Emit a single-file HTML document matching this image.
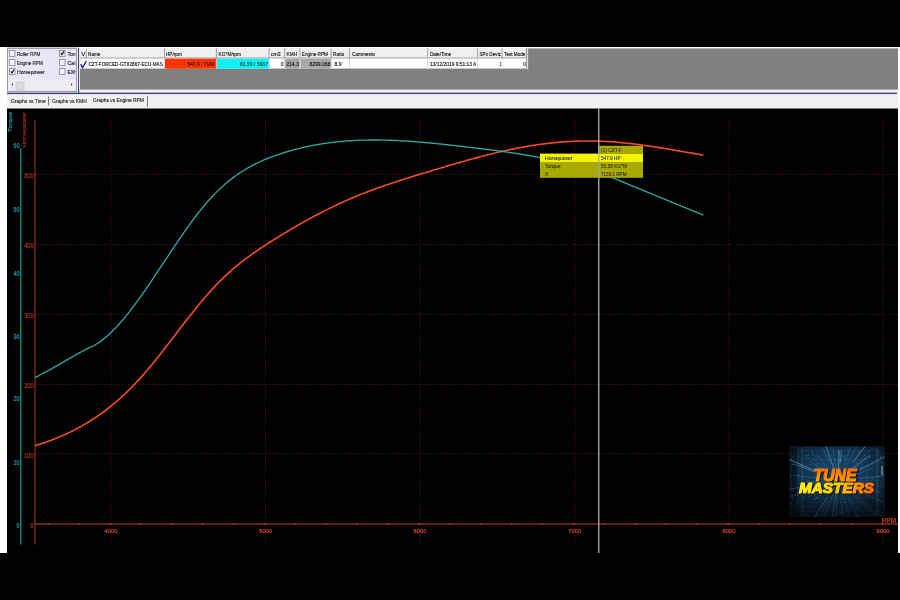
<!DOCTYPE html>
<html><head><meta charset="utf-8">
<style>
html,body{margin:0;padding:0;width:900px;height:600px;overflow:hidden;background:#000}
svg{display:block;position:absolute;left:0;top:0;will-change:transform}
text{font-family:"Liberation Sans",sans-serif}
</style></head><body>
<svg width="900" height="600" viewBox="0 0 900 600">
<rect x="0" y="47" width="900" height="506" fill="#ffffff" />
<rect x="7" y="47" width="891" height="61" fill="#f1f1f1" />
<rect x="7" y="47.2" width="71" height="1" fill="#c8c8cc" />
<rect x="7" y="48" width="70" height="44" fill="#9c9cab" />
<rect x="8" y="49" width="68" height="42" fill="#e7e7f7" />
<rect x="8" y="80" width="68" height="11" fill="#ececf2" />
<rect x="9.5" y="50.5" width="5.5" height="6" fill="#f3f3fa" stroke="#8e8e9e" stroke-width="0.9"/>
<rect x="59.5" y="50.5" width="5.5" height="6" fill="#f3f3fa" stroke="#8e8e9e" stroke-width="0.9"/>
<rect x="9.5" y="59.5" width="5.5" height="6" fill="#f3f3fa" stroke="#8e8e9e" stroke-width="0.9"/>
<rect x="59.5" y="59.5" width="5.5" height="6" fill="#f3f3fa" stroke="#8e8e9e" stroke-width="0.9"/>
<rect x="9.5" y="68.5" width="5.5" height="6" fill="#f3f3fa" stroke="#8e8e9e" stroke-width="0.9"/>
<rect x="59.5" y="68.5" width="5.5" height="6" fill="#f3f3fa" stroke="#8e8e9e" stroke-width="0.9"/>
<path d="M10.8 71.2 L12 73 L14 69.6" stroke="#111" stroke-width="1.1" fill="none"/>
<path d="M60.8 53 L62 54.8 L64 51.4" stroke="#111" stroke-width="1.1" fill="none"/>
<text x="17" y="55.6" font-size="5.3" fill="#242424" text-anchor="start" font-weight="normal" textLength="23.2" lengthAdjust="spacingAndGlyphs"  stroke="#242424" stroke-width="0.14">Roller RPM</text>
<text x="17" y="64.6" font-size="5.3" fill="#242424" text-anchor="start" font-weight="normal" textLength="25.7" lengthAdjust="spacingAndGlyphs"  stroke="#242424" stroke-width="0.14">Engine RPM</text>
<text x="17" y="73.6" font-size="5.3" fill="#242424" text-anchor="start" font-weight="normal" textLength="27.7" lengthAdjust="spacingAndGlyphs"  stroke="#242424" stroke-width="0.14">Horsepower</text>
<clipPath id="c2"><rect x="66" y="49" width="9.5" height="30"/></clipPath>
<g clip-path="url(#c2)">
<text x="67.4" y="55.6" font-size="5.3" fill="#242424" text-anchor="start" font-weight="normal" textLength="15.5" lengthAdjust="spacingAndGlyphs"  stroke="#242424" stroke-width="0.14">Torque</text>
<text x="67.4" y="64.6" font-size="5.3" fill="#242424" text-anchor="start" font-weight="normal" textLength="11" lengthAdjust="spacingAndGlyphs"  stroke="#242424" stroke-width="0.14">Calc</text>
<text x="67.4" y="73.6" font-size="5.3" fill="#242424" text-anchor="start" font-weight="normal" textLength="9.5" lengthAdjust="spacingAndGlyphs"  stroke="#242424" stroke-width="0.14">EXh</text>
</g>
<path d="M11.5 84.5 L13 83 L13 86 Z" fill="#444"/>
<path d="M72.5 84.5 L71 83 L71 86 Z" fill="#444"/>
<rect x="16" y="82" width="8" height="8" fill="#dcdcdc" stroke="#c4c4c8" stroke-width="0.8"/>
<rect x="78" y="48" width="1.2" height="46" fill="#4a4a7c" />
<rect x="7" y="92.6" width="890" height="1.9" fill="#45457a" />
<rect x="79.5" y="47" width="818.5" height="42.5" fill="#ffffff" />
<rect x="80" y="48.4" width="818" height="41.2" fill="#808080" />
<rect x="80" y="48.4" width="446.7" height="9.8" fill="#efefef" />
<rect x="80" y="48.4" width="446.7" height="0.8" fill="#ffffff" />
<rect x="80" y="57.6" width="446.7" height="0.9" fill="#8c8c8c" />
<rect x="80" y="58.4" width="446.7" height="10.6" fill="#ffffff" />
<rect x="80" y="68.6" width="446.7" height="0.9" fill="#7a7a7a" />
<rect x="164.8" y="58.6" width="51.9" height="10.1" fill="#ff3600" />
<rect x="216.9" y="58.6" width="52.4" height="10.1" fill="#10f2f2" />
<rect x="285.2" y="58.6" width="15" height="10.1" fill="#a6a6a6" />
<rect x="300.5" y="58.6" width="30.8" height="10.1" fill="#a9a9a9" />
<rect x="85.7" y="48.4" width="0.9" height="10" fill="#9a9a9a" />
<rect x="85.7" y="58.5" width="0.8" height="10.2" fill="#d8d8d8" />
<rect x="164" y="48.4" width="0.9" height="10" fill="#9a9a9a" />
<rect x="164" y="58.5" width="0.8" height="10.2" fill="#d8d8d8" />
<rect x="215.9" y="48.4" width="0.9" height="10" fill="#9a9a9a" />
<rect x="215.9" y="58.5" width="0.8" height="10.2" fill="#d8d8d8" />
<rect x="268.6" y="48.4" width="0.9" height="10" fill="#9a9a9a" />
<rect x="268.6" y="58.5" width="0.8" height="10.2" fill="#d8d8d8" />
<rect x="284.2" y="48.4" width="0.9" height="10" fill="#9a9a9a" />
<rect x="284.2" y="58.5" width="0.8" height="10.2" fill="#d8d8d8" />
<rect x="299.5" y="48.4" width="0.9" height="10" fill="#9a9a9a" />
<rect x="299.5" y="58.5" width="0.8" height="10.2" fill="#d8d8d8" />
<rect x="330.6" y="48.4" width="0.9" height="10" fill="#9a9a9a" />
<rect x="330.6" y="58.5" width="0.8" height="10.2" fill="#d8d8d8" />
<rect x="349" y="48.4" width="0.9" height="10" fill="#9a9a9a" />
<rect x="349" y="58.5" width="0.8" height="10.2" fill="#d8d8d8" />
<rect x="427.2" y="48.4" width="0.9" height="10" fill="#9a9a9a" />
<rect x="427.2" y="58.5" width="0.8" height="10.2" fill="#d8d8d8" />
<rect x="476.9" y="48.4" width="0.9" height="10" fill="#9a9a9a" />
<rect x="476.9" y="58.5" width="0.8" height="10.2" fill="#d8d8d8" />
<rect x="501.6" y="48.4" width="0.9" height="10" fill="#9a9a9a" />
<rect x="501.6" y="58.5" width="0.8" height="10.2" fill="#d8d8d8" />
<rect x="525.9" y="48.4" width="0.9" height="10" fill="#9a9a9a" />
<rect x="525.9" y="58.5" width="0.8" height="10.2" fill="#d8d8d8" />
<rect x="526.4" y="48.4" width="0.9" height="21" fill="#8a8a8a" />
<rect x="527.3" y="48.4" width="0.8" height="21" fill="#ffffff" />
<text x="81.2" y="55.7" font-size="5.4" fill="#141414" text-anchor="start" font-weight="normal" textLength="4" lengthAdjust="spacingAndGlyphs"  stroke="#141414" stroke-width="0.14">V</text>
<text x="88.1" y="55.7" font-size="5.4" fill="#141414" text-anchor="start" font-weight="normal" textLength="12.3" lengthAdjust="spacingAndGlyphs"  stroke="#141414" stroke-width="0.14">Name</text>
<text x="166" y="55.7" font-size="5.4" fill="#141414" text-anchor="start" font-weight="normal" textLength="15.8" lengthAdjust="spacingAndGlyphs"  stroke="#141414" stroke-width="0.14">HP/rpm</text>
<text x="218.6" y="55.7" font-size="5.4" fill="#141414" text-anchor="start" font-weight="normal" textLength="22.4" lengthAdjust="spacingAndGlyphs"  stroke="#141414" stroke-width="0.14">KG*M/rpm</text>
<text x="271" y="55.7" font-size="5.4" fill="#141414" text-anchor="start" font-weight="normal" textLength="9.7" lengthAdjust="spacingAndGlyphs"  stroke="#141414" stroke-width="0.14">cm3</text>
<text x="286.6" y="55.7" font-size="5.4" fill="#141414" text-anchor="start" font-weight="normal" textLength="10.6" lengthAdjust="spacingAndGlyphs"  stroke="#141414" stroke-width="0.14">KMH</text>
<text x="301.8" y="55.7" font-size="5.4" fill="#141414" text-anchor="start" font-weight="normal" textLength="26.2" lengthAdjust="spacingAndGlyphs"  stroke="#141414" stroke-width="0.14">Engine RPM</text>
<text x="333.1" y="55.7" font-size="5.4" fill="#141414" text-anchor="start" font-weight="normal" textLength="11" lengthAdjust="spacingAndGlyphs"  stroke="#141414" stroke-width="0.14">Ratio</text>
<text x="352" y="55.7" font-size="5.4" fill="#141414" text-anchor="start" font-weight="normal" textLength="23" lengthAdjust="spacingAndGlyphs"  stroke="#141414" stroke-width="0.14">Comments</text>
<text x="429.9" y="55.7" font-size="5.4" fill="#141414" text-anchor="start" font-weight="normal" textLength="21.2" lengthAdjust="spacingAndGlyphs"  stroke="#141414" stroke-width="0.14">Date/Time</text>
<text x="479.4" y="55.7" font-size="5.4" fill="#141414" text-anchor="start" font-weight="normal" textLength="21.7" lengthAdjust="spacingAndGlyphs"  stroke="#141414" stroke-width="0.14">SPx Devic</text>
<text x="504.1" y="55.7" font-size="5.4" fill="#141414" text-anchor="start" font-weight="normal" textLength="21.2" lengthAdjust="spacingAndGlyphs"  stroke="#141414" stroke-width="0.14">Test Mode</text>
<path d="M80.6 64.2 L82.6 67.6 L86.2 61.2" stroke="#1414b4" stroke-width="1.3" fill="none"/>
<clipPath id="cn"><rect x="86.5" y="58" width="77.5" height="11"/></clipPath>
<text x="88.5" y="65.8" font-size="5.5" fill="#121212" text-anchor="start" font-weight="normal" textLength="74.3" lengthAdjust="spacingAndGlyphs"  stroke="#121212" stroke-width="0.14"><tspan clip-path="url(#cn)">CZT-FORCED-GTX2867-ECU-MAS</tspan></text>
<text x="187.6" y="65.8" font-size="5.5" fill="#3a0a00" text-anchor="start" font-weight="normal" textLength="27.1" lengthAdjust="spacingAndGlyphs"  stroke="#3a0a00" stroke-width="0.14">547.9 / 7180</text>
<text x="239.8" y="65.8" font-size="5.5" fill="#0b4848" text-anchor="start" font-weight="normal" textLength="28.2" lengthAdjust="spacingAndGlyphs"  stroke="#0b4848" stroke-width="0.14">60.59 / 5687</text>
<text x="280.7" y="65.8" font-size="5.5" fill="#121212" text-anchor="start" font-weight="normal" textLength="2.8" lengthAdjust="spacingAndGlyphs"  stroke="#121212" stroke-width="0.14">0</text>
<text x="286.2" y="65.8" font-size="5.5" fill="#121212" text-anchor="start" font-weight="normal" textLength="12.7" lengthAdjust="spacingAndGlyphs"  stroke="#121212" stroke-width="0.14">214.3</text>
<text x="309.4" y="65.8" font-size="5.5" fill="#121212" text-anchor="start" font-weight="normal" textLength="21.2" lengthAdjust="spacingAndGlyphs"  stroke="#121212" stroke-width="0.14">8299.068</text>
<text x="334.4" y="65.8" font-size="5.5" fill="#121212" text-anchor="start" font-weight="normal" textLength="7.1" lengthAdjust="spacingAndGlyphs"  stroke="#121212" stroke-width="0.14">8.9</text>
<text x="429.9" y="65.8" font-size="5.5" fill="#121212" text-anchor="start" font-weight="normal" textLength="46.5" lengthAdjust="spacingAndGlyphs"  stroke="#121212" stroke-width="0.14">13/12/2019 9:51:13 A</text>
<text x="499.6" y="65.8" font-size="5.5" fill="#121212" text-anchor="start" font-weight="normal" textLength="1.8" lengthAdjust="spacingAndGlyphs"  stroke="#121212" stroke-width="0.14">1</text>
<text x="523.3" y="65.8" font-size="5.5" fill="#121212" text-anchor="start" font-weight="normal" textLength="2.6" lengthAdjust="spacingAndGlyphs"  stroke="#121212" stroke-width="0.14">0</text>
<rect x="7" y="94.3" width="891" height="0.8" fill="#ffffff" />
<text x="11" y="102.7" font-size="5.6" fill="#242424" text-anchor="start" font-weight="normal" textLength="34.7" lengthAdjust="spacingAndGlyphs"  stroke="#242424" stroke-width="0.14">Graphs vs Time</text>
<rect x="48" y="96.5" width="0.9" height="9" fill="#707070" />
<text x="52" y="102.9" font-size="5.6" fill="#242424" text-anchor="start" font-weight="normal" textLength="34.7" lengthAdjust="spacingAndGlyphs"  stroke="#242424" stroke-width="0.14">Graphs vs KMH</text>
<text x="93" y="102.2" font-size="5.6" fill="#222" text-anchor="start" font-weight="normal" textLength="50.9" lengthAdjust="spacingAndGlyphs"  stroke="#222" stroke-width="0.14">Graphs vs Engine RPM</text>
<rect x="147" y="95.8" width="0.9" height="11" fill="#707070" />
<rect x="7" y="108.5" width="891" height="444.5" fill="#000000" />
<line x1="35" y1="174.5" x2="898" y2="174.5" stroke="#3c1612" stroke-width="1" stroke-dasharray="1.5,1.5"/>
<line x1="35" y1="244.5" x2="898" y2="244.5" stroke="#3c1612" stroke-width="1" stroke-dasharray="1.5,1.5"/>
<line x1="35" y1="314.5" x2="898" y2="314.5" stroke="#3c1612" stroke-width="1" stroke-dasharray="1.5,1.5"/>
<line x1="35" y1="384.5" x2="898" y2="384.5" stroke="#3c1612" stroke-width="1" stroke-dasharray="1.5,1.5"/>
<line x1="35" y1="453.5" x2="898" y2="453.5" stroke="#3c1612" stroke-width="1" stroke-dasharray="1.5,1.5"/>
<line x1="111" y1="120" x2="111" y2="546" stroke="#3c1612" stroke-width="1" stroke-dasharray="1.5,1.5"/>
<line x1="265.5" y1="120" x2="265.5" y2="546" stroke="#3c1612" stroke-width="1" stroke-dasharray="1.5,1.5"/>
<line x1="420" y1="120" x2="420" y2="546" stroke="#3c1612" stroke-width="1" stroke-dasharray="1.5,1.5"/>
<line x1="574.8" y1="120" x2="574.8" y2="546" stroke="#3c1612" stroke-width="1" stroke-dasharray="1.5,1.5"/>
<line x1="729" y1="120" x2="729" y2="546" stroke="#3c1612" stroke-width="1" stroke-dasharray="1.5,1.5"/>
<line x1="883" y1="120" x2="883" y2="546" stroke="#3c1612" stroke-width="1" stroke-dasharray="1.5,1.5"/>
<line x1="35" y1="524" x2="898" y2="524" stroke="#862c16" stroke-width="1.5" />
<line x1="35" y1="120" x2="35" y2="544.5" stroke="#922e18" stroke-width="1.25" />
<line x1="20.8" y1="148" x2="20.8" y2="544.5" stroke="#169a94" stroke-width="1.25" />
<rect x="47.5" y="523.2" width="1.2" height="1.6" fill="#a8442a" />
<rect x="78.4" y="523.2" width="1.2" height="1.6" fill="#a8442a" />
<rect x="109.3" y="523.2" width="1.2" height="1.6" fill="#a8442a" />
<rect x="140.2" y="523.2" width="1.2" height="1.6" fill="#a8442a" />
<rect x="171.1" y="523.2" width="1.2" height="1.6" fill="#a8442a" />
<rect x="202" y="523.2" width="1.2" height="1.6" fill="#a8442a" />
<rect x="232.9" y="523.2" width="1.2" height="1.6" fill="#a8442a" />
<rect x="263.8" y="523.2" width="1.2" height="1.6" fill="#a8442a" />
<rect x="294.7" y="523.2" width="1.2" height="1.6" fill="#a8442a" />
<rect x="325.6" y="523.2" width="1.2" height="1.6" fill="#a8442a" />
<rect x="356.5" y="523.2" width="1.2" height="1.6" fill="#a8442a" />
<rect x="387.4" y="523.2" width="1.2" height="1.6" fill="#a8442a" />
<rect x="418.3" y="523.2" width="1.2" height="1.6" fill="#a8442a" />
<rect x="449.2" y="523.2" width="1.2" height="1.6" fill="#a8442a" />
<rect x="480.1" y="523.2" width="1.2" height="1.6" fill="#a8442a" />
<rect x="511" y="523.2" width="1.2" height="1.6" fill="#a8442a" />
<rect x="541.9" y="523.2" width="1.2" height="1.6" fill="#a8442a" />
<rect x="572.8" y="523.2" width="1.2" height="1.6" fill="#a8442a" />
<rect x="603.7" y="523.2" width="1.2" height="1.6" fill="#a8442a" />
<rect x="634.6" y="523.2" width="1.2" height="1.6" fill="#a8442a" />
<rect x="665.5" y="523.2" width="1.2" height="1.6" fill="#a8442a" />
<rect x="696.4" y="523.2" width="1.2" height="1.6" fill="#a8442a" />
<rect x="727.3" y="523.2" width="1.2" height="1.6" fill="#a8442a" />
<rect x="758.2" y="523.2" width="1.2" height="1.6" fill="#a8442a" />
<rect x="789.1" y="523.2" width="1.2" height="1.6" fill="#a8442a" />
<rect x="820" y="523.2" width="1.2" height="1.6" fill="#a8442a" />
<rect x="850.9" y="523.2" width="1.2" height="1.6" fill="#a8442a" />
<rect x="881.8" y="523.2" width="1.2" height="1.6" fill="#a8442a" />
<path d="M35.0 445.67 L36.0 445.37 L37.0 445.06 L38.0 444.75 L39.0 444.43 L40.0 444.11 L41.0 443.79 L42.0 443.46 L43.0 443.12 L44.0 442.78 L45.0 442.44 L46.0 442.09 L47.0 441.74 L48.0 441.38 L49.0 441.02 L50.0 440.65 L51.0 440.28 L52.0 439.90 L53.0 439.52 L54.0 439.13 L55.0 438.74 L56.0 438.34 L57.0 437.93 L58.0 437.52 L59.0 437.11 L60.0 436.69 L61.0 436.26 L62.0 435.83 L63.0 435.39 L64.0 434.95 L65.0 434.49 L66.0 434.04 L67.0 433.58 L68.0 433.11 L69.0 432.63 L70.0 432.15 L71.0 431.66 L72.0 431.17 L73.0 430.67 L74.0 430.16 L75.0 429.64 L76.0 429.12 L77.0 428.59 L78.0 428.06 L79.0 427.52 L80.0 426.97 L81.0 426.41 L82.0 425.85 L83.0 425.28 L84.0 424.70 L85.0 424.11 L86.0 423.52 L87.0 422.92 L88.0 422.31 L89.0 421.69 L90.0 421.07 L91.0 420.44 L92.0 419.80 L93.0 419.15 L94.0 418.50 L95.0 417.83 L96.0 417.16 L97.0 416.48 L98.0 415.79 L99.0 415.10 L100.0 414.39 L101.0 413.68 L102.0 412.96 L103.0 412.23 L104.0 411.49 L105.0 410.74 L106.0 409.98 L107.0 409.22 L108.0 408.44 L109.0 407.66 L110.0 406.86 L111.0 406.06 L112.0 405.25 L113.0 404.43 L114.0 403.60 L115.0 402.76 L116.0 401.91 L117.0 401.05 L118.0 400.18 L119.0 399.30 L120.0 398.41 L121.0 397.51 L122.0 396.60 L123.0 395.69 L124.0 394.76 L125.0 393.82 L126.0 392.87 L127.0 391.91 L128.0 390.94 L129.0 389.96 L130.0 388.97 L131.0 387.97 L132.0 386.96 L133.0 385.93 L134.0 384.90 L135.0 383.86 L136.0 382.80 L137.0 381.73 L138.0 380.66 L139.0 379.57 L140.0 378.47 L141.0 377.36 L142.0 376.24 L143.0 375.10 L144.0 373.96 L145.0 372.81 L146.0 371.64 L147.0 370.47 L148.0 369.29 L149.0 368.10 L150.0 366.90 L151.0 365.70 L152.0 364.48 L153.0 363.26 L154.0 362.03 L155.0 360.80 L156.0 359.55 L157.0 358.31 L158.0 357.05 L159.0 355.79 L160.0 354.53 L161.0 353.26 L162.0 351.98 L163.0 350.70 L164.0 349.42 L165.0 348.13 L166.0 346.84 L167.0 345.55 L168.0 344.26 L169.0 342.96 L170.0 341.66 L171.0 340.36 L172.0 339.05 L173.0 337.75 L174.0 336.44 L175.0 335.14 L176.0 333.83 L177.0 332.53 L178.0 331.22 L179.0 329.92 L180.0 328.61 L181.0 327.31 L182.0 326.01 L183.0 324.72 L184.0 323.42 L185.0 322.13 L186.0 320.84 L187.0 319.55 L188.0 318.27 L189.0 316.99 L190.0 315.72 L191.0 314.45 L192.0 313.18 L193.0 311.92 L194.0 310.67 L195.0 309.42 L196.0 308.18 L197.0 306.94 L198.0 305.71 L199.0 304.49 L200.0 303.28 L201.0 302.07 L202.0 300.88 L203.0 299.69 L204.0 298.51 L205.0 297.33 L206.0 296.17 L207.0 295.02 L208.0 293.88 L209.0 292.75 L210.0 291.62 L211.0 290.51 L212.0 289.42 L213.0 288.33 L214.0 287.25 L215.0 286.19 L216.0 285.14 L217.0 284.10 L218.0 283.07 L219.0 282.06 L220.0 281.06 L221.0 280.07 L222.0 279.09 L223.0 278.12 L224.0 277.16 L225.0 276.22 L226.0 275.28 L227.0 274.36 L228.0 273.45 L229.0 272.54 L230.0 271.65 L231.0 270.77 L232.0 269.89 L233.0 269.03 L234.0 268.17 L235.0 267.33 L236.0 266.49 L237.0 265.67 L238.0 264.85 L239.0 264.04 L240.0 263.23 L241.0 262.44 L242.0 261.65 L243.0 260.88 L244.0 260.10 L245.0 259.34 L246.0 258.59 L247.0 257.84 L248.0 257.09 L249.0 256.36 L250.0 255.63 L251.0 254.91 L252.0 254.19 L253.0 253.48 L254.0 252.78 L255.0 252.08 L256.0 251.38 L257.0 250.70 L258.0 250.01 L259.0 249.33 L260.0 248.66 L261.0 247.99 L262.0 247.33 L263.0 246.67 L264.0 246.01 L265.0 245.36 L266.0 244.71 L267.0 244.07 L268.0 243.42 L269.0 242.79 L270.0 242.15 L271.0 241.52 L272.0 240.89 L273.0 240.26 L274.0 239.63 L275.0 239.01 L276.0 238.39 L277.0 237.77 L278.0 237.15 L279.0 236.53 L280.0 235.92 L281.0 235.31 L282.0 234.70 L283.0 234.09 L284.0 233.48 L285.0 232.88 L286.0 232.28 L287.0 231.68 L288.0 231.08 L289.0 230.49 L290.0 229.89 L291.0 229.30 L292.0 228.71 L293.0 228.13 L294.0 227.54 L295.0 226.96 L296.0 226.38 L297.0 225.80 L298.0 225.23 L299.0 224.65 L300.0 224.08 L301.0 223.51 L302.0 222.95 L303.0 222.38 L304.0 221.82 L305.0 221.26 L306.0 220.71 L307.0 220.15 L308.0 219.60 L309.0 219.05 L310.0 218.51 L311.0 217.96 L312.0 217.42 L313.0 216.88 L314.0 216.35 L315.0 215.81 L316.0 215.28 L317.0 214.75 L318.0 214.23 L319.0 213.70 L320.0 213.18 L321.0 212.66 L322.0 212.15 L323.0 211.64 L324.0 211.13 L325.0 210.62 L326.0 210.12 L327.0 209.61 L328.0 209.12 L329.0 208.62 L330.0 208.13 L331.0 207.64 L332.0 207.15 L333.0 206.67 L334.0 206.19 L335.0 205.71 L336.0 205.23 L337.0 204.76 L338.0 204.29 L339.0 203.83 L340.0 203.36 L341.0 202.90 L342.0 202.44 L343.0 201.99 L344.0 201.54 L345.0 201.09 L346.0 200.65 L347.0 200.21 L348.0 199.77 L349.0 199.33 L350.0 198.90 L351.0 198.47 L352.0 198.05 L353.0 197.62 L354.0 197.20 L355.0 196.79 L356.0 196.37 L357.0 195.96 L358.0 195.55 L359.0 195.15 L360.0 194.74 L361.0 194.34 L362.0 193.95 L363.0 193.55 L364.0 193.16 L365.0 192.77 L366.0 192.38 L367.0 192.00 L368.0 191.62 L369.0 191.24 L370.0 190.86 L371.0 190.48 L372.0 190.11 L373.0 189.74 L374.0 189.37 L375.0 189.00 L376.0 188.64 L377.0 188.28 L378.0 187.92 L379.0 187.56 L380.0 187.21 L381.0 186.85 L382.0 186.50 L383.0 186.15 L384.0 185.80 L385.0 185.46 L386.0 185.11 L387.0 184.77 L388.0 184.43 L389.0 184.09 L390.0 183.75 L391.0 183.42 L392.0 183.08 L393.0 182.75 L394.0 182.42 L395.0 182.09 L396.0 181.76 L397.0 181.43 L398.0 181.11 L399.0 180.79 L400.0 180.46 L401.0 180.14 L402.0 179.82 L403.0 179.50 L404.0 179.18 L405.0 178.87 L406.0 178.55 L407.0 178.24 L408.0 177.92 L409.0 177.61 L410.0 177.30 L411.0 176.99 L412.0 176.68 L413.0 176.37 L414.0 176.06 L415.0 175.76 L416.0 175.45 L417.0 175.14 L418.0 174.84 L419.0 174.53 L420.0 174.23 L421.0 173.93 L422.0 173.62 L423.0 173.32 L424.0 173.02 L425.0 172.72 L426.0 172.42 L427.0 172.12 L428.0 171.81 L429.0 171.51 L430.0 171.21 L431.0 170.91 L432.0 170.62 L433.0 170.32 L434.0 170.02 L435.0 169.72 L436.0 169.42 L437.0 169.12 L438.0 168.82 L439.0 168.52 L440.0 168.22 L441.0 167.93 L442.0 167.63 L443.0 167.33 L444.0 167.03 L445.0 166.74 L446.0 166.44 L447.0 166.14 L448.0 165.85 L449.0 165.55 L450.0 165.26 L451.0 164.97 L452.0 164.67 L453.0 164.38 L454.0 164.09 L455.0 163.80 L456.0 163.51 L457.0 163.22 L458.0 162.93 L459.0 162.64 L460.0 162.35 L461.0 162.06 L462.0 161.78 L463.0 161.49 L464.0 161.21 L465.0 160.93 L466.0 160.64 L467.0 160.36 L468.0 160.08 L469.0 159.80 L470.0 159.53 L471.0 159.25 L472.0 158.97 L473.0 158.70 L474.0 158.43 L475.0 158.15 L476.0 157.88 L477.0 157.61 L478.0 157.35 L479.0 157.08 L480.0 156.81 L481.0 156.55 L482.0 156.29 L483.0 156.03 L484.0 155.77 L485.0 155.51 L486.0 155.25 L487.0 155.00 L488.0 154.74 L489.0 154.49 L490.0 154.24 L491.0 153.99 L492.0 153.74 L493.0 153.50 L494.0 153.26 L495.0 153.01 L496.0 152.77 L497.0 152.54 L498.0 152.30 L499.0 152.07 L500.0 151.83 L501.0 151.60 L502.0 151.37 L503.0 151.15 L504.0 150.92 L505.0 150.70 L506.0 150.48 L507.0 150.26 L508.0 150.05 L509.0 149.83 L510.0 149.62 L511.0 149.41 L512.0 149.21 L513.0 149.00 L514.0 148.80 L515.0 148.60 L516.0 148.40 L517.0 148.20 L518.0 148.01 L519.0 147.82 L520.0 147.63 L521.0 147.45 L522.0 147.26 L523.0 147.08 L524.0 146.90 L525.0 146.73 L526.0 146.55 L527.0 146.38 L528.0 146.21 L529.0 146.04 L530.0 145.88 L531.0 145.72 L532.0 145.56 L533.0 145.40 L534.0 145.25 L535.0 145.10 L536.0 144.95 L537.0 144.80 L538.0 144.65 L539.0 144.51 L540.0 144.37 L541.0 144.24 L542.0 144.10 L543.0 143.97 L544.0 143.84 L545.0 143.72 L546.0 143.59 L547.0 143.47 L548.0 143.36 L549.0 143.24 L550.0 143.13 L551.0 143.02 L552.0 142.91 L553.0 142.81 L554.0 142.70 L555.0 142.60 L556.0 142.51 L557.0 142.41 L558.0 142.32 L559.0 142.24 L560.0 142.15 L561.0 142.07 L562.0 141.99 L563.0 141.91 L564.0 141.84 L565.0 141.77 L566.0 141.70 L567.0 141.63 L568.0 141.57 L569.0 141.51 L570.0 141.46 L571.0 141.40 L572.0 141.35 L573.0 141.30 L574.0 141.26 L575.0 141.22 L576.0 141.18 L577.0 141.14 L578.0 141.11 L579.0 141.08 L580.0 141.05 L581.0 141.03 L582.0 141.01 L583.0 140.99 L584.0 140.97 L585.0 140.96 L586.0 140.95 L587.0 140.95 L588.0 140.95 L589.0 140.95 L590.0 140.95 L591.0 140.96 L592.0 140.97 L593.0 140.98 L594.0 141.00 L595.0 141.02 L596.0 141.04 L597.0 141.07 L598.0 141.10 L599.0 141.13 L600.0 141.16 L601.0 141.20 L602.0 141.25 L603.0 141.29 L604.0 141.34 L605.0 141.39 L606.0 141.44 L607.0 141.50 L608.0 141.56 L609.0 141.62 L610.0 141.69 L611.0 141.76 L612.0 141.83 L613.0 141.90 L614.0 141.98 L615.0 142.06 L616.0 142.14 L617.0 142.22 L618.0 142.31 L619.0 142.40 L620.0 142.49 L621.0 142.59 L622.0 142.68 L623.0 142.78 L624.0 142.88 L625.0 142.99 L626.0 143.09 L627.0 143.20 L628.0 143.31 L629.0 143.42 L630.0 143.54 L631.0 143.65 L632.0 143.77 L633.0 143.89 L634.0 144.01 L635.0 144.14 L636.0 144.26 L637.0 144.39 L638.0 144.52 L639.0 144.65 L640.0 144.79 L641.0 144.92 L642.0 145.06 L643.0 145.20 L644.0 145.34 L645.0 145.48 L646.0 145.62 L647.0 145.76 L648.0 145.91 L649.0 146.06 L650.0 146.20 L651.0 146.35 L652.0 146.50 L653.0 146.66 L654.0 146.81 L655.0 146.96 L656.0 147.12 L657.0 147.28 L658.0 147.43 L659.0 147.59 L660.0 147.75 L661.0 147.91 L662.0 148.07 L663.0 148.24 L664.0 148.40 L665.0 148.56 L666.0 148.73 L667.0 148.90 L668.0 149.06 L669.0 149.23 L670.0 149.40 L671.0 149.56 L672.0 149.73 L673.0 149.90 L674.0 150.07 L675.0 150.24 L676.0 150.41 L677.0 150.58 L678.0 150.75 L679.0 150.93 L680.0 151.10 L681.0 151.27 L682.0 151.44 L683.0 151.61 L684.0 151.79 L685.0 151.96 L686.0 152.13 L687.0 152.30 L688.0 152.47 L689.0 152.65 L690.0 152.82 L691.0 152.99 L692.0 153.16 L693.0 153.33 L694.0 153.51 L695.0 153.68 L696.0 153.85 L697.0 154.02 L698.0 154.19 L699.0 154.36 L700.0 154.53 L701.0 154.69 L702.0 154.86 L703.0 155.03 L703.3 155.08" fill="none" stroke="#f04a26" stroke-width="1.65" stroke-linejoin="round"/>
<path d="M35.0 377.50 L36.0 377.02 L37.0 376.53 L38.0 376.03 L39.0 375.53 L40.0 375.02 L41.0 374.51 L42.0 373.99 L43.0 373.46 L44.0 372.93 L45.0 372.40 L46.0 371.86 L47.0 371.31 L48.0 370.76 L49.0 370.21 L50.0 369.66 L51.0 369.10 L52.0 368.53 L53.0 367.97 L54.0 367.40 L55.0 366.83 L56.0 366.26 L57.0 365.69 L58.0 365.11 L59.0 364.54 L60.0 363.96 L61.0 363.38 L62.0 362.80 L63.0 362.22 L64.0 361.64 L65.0 361.06 L66.0 360.48 L67.0 359.91 L68.0 359.33 L69.0 358.75 L70.0 358.18 L71.0 357.61 L72.0 357.03 L73.0 356.47 L74.0 355.90 L75.0 355.34 L76.0 354.78 L77.0 354.22 L78.0 353.66 L79.0 353.11 L80.0 352.57 L81.0 352.03 L82.0 351.49 L83.0 350.96 L84.0 350.43 L85.0 349.90 L86.0 349.39 L87.0 348.88 L88.0 348.37 L89.0 347.87 L89.5 347.62 L90.5 347.20 L91.5 346.74 L92.5 346.26 L93.5 345.74 L94.5 345.20 L95.5 344.63 L96.5 344.04 L97.5 343.41 L98.5 342.76 L99.5 342.09 L100.5 341.38 L101.5 340.66 L102.5 339.90 L103.5 339.12 L104.5 338.32 L105.5 337.50 L106.5 336.65 L107.5 335.78 L108.5 334.88 L109.5 333.96 L110.5 333.03 L111.5 332.07 L112.5 331.09 L113.5 330.08 L114.5 329.06 L115.5 328.02 L116.5 326.96 L117.5 325.88 L118.5 324.78 L119.5 323.67 L120.5 322.53 L121.5 321.38 L122.5 320.21 L123.5 319.03 L124.5 317.83 L125.5 316.61 L126.5 315.38 L127.5 314.14 L128.5 312.87 L129.5 311.60 L130.5 310.31 L131.5 309.01 L132.5 307.70 L133.5 306.37 L134.5 305.03 L135.5 303.68 L136.5 302.32 L137.5 300.95 L138.5 299.57 L139.5 298.17 L140.5 296.77 L141.5 295.36 L142.5 293.94 L143.5 292.51 L144.5 291.08 L145.5 289.63 L146.5 288.18 L147.5 286.73 L148.5 285.26 L149.5 283.79 L150.5 282.32 L151.5 280.84 L152.5 279.35 L153.5 277.86 L154.5 276.37 L155.5 274.88 L156.5 273.38 L157.5 271.88 L158.5 270.37 L159.5 268.87 L160.5 267.36 L161.5 265.85 L162.5 264.34 L163.5 262.83 L164.5 261.32 L165.5 259.81 L166.5 258.30 L167.5 256.80 L168.5 255.29 L169.5 253.79 L170.5 252.29 L171.5 250.79 L172.5 249.29 L173.5 247.80 L174.5 246.31 L175.5 244.82 L176.5 243.34 L177.5 241.87 L178.5 240.40 L179.5 238.93 L180.5 237.47 L181.5 236.02 L182.5 234.58 L183.5 233.14 L184.5 231.71 L185.5 230.28 L186.5 228.87 L187.5 227.46 L188.5 226.07 L189.5 224.68 L190.5 223.30 L191.5 221.93 L192.5 220.58 L193.5 219.23 L194.5 217.89 L195.5 216.57 L196.5 215.26 L197.5 213.96 L198.5 212.67 L199.5 211.40 L200.5 210.14 L201.5 208.90 L202.5 207.66 L203.5 206.45 L204.5 205.25 L205.5 204.06 L206.5 202.89 L207.5 201.73 L208.5 200.60 L209.5 199.47 L210.5 198.37 L211.5 197.28 L212.5 196.21 L213.5 195.16 L214.5 194.13 L215.5 193.11 L216.5 192.11 L217.5 191.12 L218.5 190.15 L219.5 189.19 L220.5 188.26 L221.5 187.33 L222.5 186.43 L223.5 185.53 L224.5 184.66 L225.5 183.79 L226.5 182.94 L227.5 182.11 L228.5 181.29 L229.5 180.49 L230.5 179.70 L231.5 178.92 L232.5 178.15 L233.5 177.40 L234.5 176.66 L235.5 175.94 L236.5 175.23 L237.5 174.53 L238.5 173.84 L239.5 173.17 L240.5 172.50 L241.5 171.85 L242.5 171.21 L243.5 170.59 L244.5 169.97 L245.5 169.36 L246.5 168.77 L247.5 168.19 L248.5 167.61 L249.5 167.05 L250.5 166.50 L251.5 165.96 L252.5 165.43 L253.5 164.90 L254.5 164.39 L255.5 163.89 L256.5 163.39 L257.5 162.90 L258.5 162.43 L259.5 161.96 L260.5 161.50 L261.5 161.05 L262.5 160.60 L263.5 160.17 L264.5 159.74 L265.5 159.32 L266.5 158.90 L267.5 158.50 L268.5 158.10 L269.5 157.70 L270.5 157.32 L271.5 156.94 L272.5 156.56 L273.5 156.20 L274.5 155.84 L275.5 155.48 L276.5 155.13 L277.5 154.78 L278.5 154.44 L279.5 154.11 L280.5 153.78 L281.5 153.45 L282.5 153.13 L283.5 152.81 L284.5 152.50 L285.5 152.19 L286.5 151.89 L287.5 151.59 L288.5 151.29 L289.5 151.00 L290.5 150.72 L291.5 150.44 L292.5 150.16 L293.5 149.89 L294.5 149.62 L295.5 149.35 L296.5 149.09 L297.5 148.84 L298.5 148.59 L299.5 148.34 L300.5 148.10 L301.5 147.86 L302.5 147.62 L303.5 147.39 L304.5 147.17 L305.5 146.94 L306.5 146.72 L307.5 146.51 L308.5 146.30 L309.5 146.09 L310.5 145.89 L311.5 145.69 L312.5 145.50 L313.5 145.31 L314.5 145.12 L315.5 144.93 L316.5 144.76 L317.5 144.58 L318.5 144.41 L319.5 144.24 L320.5 144.07 L321.5 143.91 L322.5 143.76 L323.5 143.60 L324.5 143.45 L325.5 143.30 L326.5 143.16 L327.5 143.02 L328.5 142.89 L329.5 142.75 L330.5 142.62 L331.5 142.50 L332.5 142.38 L333.5 142.26 L334.5 142.14 L335.5 142.03 L336.5 141.92 L337.5 141.81 L338.5 141.71 L339.5 141.61 L340.5 141.52 L341.5 141.42 L342.5 141.33 L343.5 141.25 L344.5 141.17 L345.5 141.08 L346.5 141.01 L347.5 140.93 L348.5 140.86 L349.5 140.79 L350.5 140.73 L351.5 140.67 L352.5 140.61 L353.5 140.55 L354.5 140.50 L355.5 140.45 L356.5 140.40 L357.5 140.35 L358.5 140.31 L359.5 140.27 L360.5 140.24 L361.5 140.20 L362.5 140.17 L363.5 140.14 L364.5 140.12 L365.5 140.09 L366.5 140.07 L367.5 140.05 L368.5 140.04 L369.5 140.02 L370.5 140.01 L371.5 140.00 L372.5 140.00 L373.5 139.99 L374.5 139.99 L375.5 140.00 L376.5 140.00 L377.5 140.01 L378.5 140.01 L379.5 140.02 L380.5 140.04 L381.5 140.05 L382.5 140.07 L383.5 140.09 L384.5 140.11 L385.5 140.13 L386.5 140.16 L387.5 140.19 L388.5 140.22 L389.5 140.25 L390.5 140.28 L391.5 140.32 L392.5 140.36 L393.5 140.40 L394.5 140.44 L395.5 140.48 L396.5 140.53 L397.5 140.58 L398.5 140.63 L399.5 140.68 L400.5 140.73 L401.5 140.79 L402.5 140.84 L403.5 140.90 L404.5 140.96 L405.5 141.02 L406.5 141.08 L407.5 141.15 L408.5 141.22 L409.5 141.28 L410.5 141.35 L411.5 141.42 L412.5 141.50 L413.5 141.57 L414.5 141.65 L415.5 141.72 L416.5 141.80 L417.5 141.88 L418.5 141.96 L419.5 142.04 L420.5 142.13 L421.5 142.21 L422.5 142.30 L423.5 142.38 L424.5 142.47 L425.5 142.56 L426.5 142.65 L427.5 142.75 L428.5 142.84 L429.5 142.93 L430.5 143.03 L431.5 143.12 L432.5 143.22 L433.5 143.32 L434.5 143.42 L435.5 143.52 L436.5 143.62 L437.5 143.72 L438.5 143.82 L439.5 143.93 L440.5 144.03 L441.5 144.14 L442.5 144.24 L443.5 144.35 L444.5 144.46 L445.5 144.57 L446.5 144.68 L447.5 144.78 L448.5 144.90 L449.5 145.01 L450.5 145.12 L451.5 145.23 L452.5 145.34 L453.5 145.45 L454.5 145.57 L455.5 145.68 L456.5 145.80 L457.5 145.91 L458.5 146.03 L459.5 146.14 L460.5 146.26 L461.5 146.37 L462.5 146.49 L463.5 146.61 L464.5 146.72 L465.5 146.84 L466.5 146.96 L467.5 147.08 L468.5 147.20 L469.5 147.31 L470.5 147.43 L471.5 147.55 L472.5 147.67 L473.5 147.79 L474.5 147.91 L475.5 148.03 L476.5 148.15 L477.5 148.27 L478.5 148.39 L479.5 148.51 L480.5 148.63 L481.5 148.76 L482.5 148.88 L483.5 149.00 L484.5 149.13 L485.5 149.25 L486.5 149.38 L487.5 149.50 L488.5 149.63 L489.5 149.76 L490.5 149.88 L491.5 150.01 L492.5 150.14 L493.5 150.27 L494.5 150.40 L495.5 150.53 L496.5 150.67 L497.5 150.80 L498.5 150.93 L499.5 151.07 L500.5 151.20 L501.5 151.34 L502.5 151.48 L503.5 151.62 L504.5 151.76 L505.5 151.90 L506.5 152.04 L507.5 152.19 L508.5 152.33 L509.5 152.47 L510.5 152.62 L511.5 152.77 L512.5 152.92 L513.5 153.07 L514.5 153.22 L515.5 153.37 L516.5 153.53 L517.5 153.68 L518.5 153.84 L519.5 154.00 L520.5 154.16 L521.5 154.32 L522.5 154.48 L523.5 154.64 L524.5 154.81 L525.5 154.97 L526.5 155.14 L527.5 155.31 L528.5 155.48 L529.5 155.66 L530.5 155.83 L531.5 156.01 L532.5 156.18 L533.5 156.36 L534.5 156.54 L535.5 156.73 L536.5 156.91 L537.5 157.10 L538.5 157.29 L539.5 157.48 L540.5 157.67 L541.5 157.86 L542.5 158.06 L543.5 158.25 L544.5 158.45 L545.5 158.65 L546.5 158.86 L547.5 159.06 L548.5 159.27 L549.5 159.48 L550.5 159.69 L551.5 159.91 L552.5 160.12 L553.5 160.34 L554.5 160.56 L555.5 160.78 L556.5 161.00 L557.5 161.23 L558.5 161.46 L559.5 161.69 L560.5 161.92 L561.5 162.16 L562.5 162.40 L563.5 162.64 L564.5 162.88 L565.5 163.13 L566.5 163.37 L567.5 163.62 L568.5 163.88 L569.5 164.13 L570.5 164.39 L571.5 164.65 L572.5 164.91 L573.5 165.18 L574.5 165.45 L575.5 165.72 L576.5 165.99 L577.5 166.27 L578.5 166.54 L579.5 166.83 L580.5 167.11 L581.5 167.40 L582.5 167.69 L583.5 167.98 L584.5 168.27 L585.5 168.57 L586.5 168.87 L587.5 169.18 L588.5 169.48 L589.5 169.79 L590.5 170.11 L591.5 170.42 L592.5 170.74 L593.5 171.06 L594.5 171.39 L595.5 171.72 L596.5 172.05 L597.5 172.38 L598.5 172.72 L599.5 173.06 L600.5 173.40 L601.5 173.75 L602.5 174.10 L603.5 174.46 L604.5 174.81 L605.5 175.17 L606.5 175.54 L607.5 175.90 L608.5 176.27 L609.5 176.65 L610.5 177.03 L611.5 177.41 L612.5 177.79 L613.3 178.10 L614.3 178.51 L615.3 178.92 L616.3 179.34 L617.3 179.75 L618.3 180.16 L619.3 180.57 L620.3 180.98 L621.3 181.39 L622.3 181.80 L623.3 182.21 L624.3 182.63 L625.3 183.04 L626.3 183.45 L627.3 183.86 L628.3 184.27 L629.3 184.68 L630.3 185.09 L631.3 185.51 L632.3 185.92 L633.3 186.33 L634.3 186.74 L635.3 187.15 L636.3 187.56 L637.3 187.97 L638.3 188.38 L639.3 188.80 L640.3 189.21 L641.3 189.62 L642.3 190.03 L643.3 190.44 L644.3 190.85 L645.3 191.26 L646.3 191.68 L647.3 192.09 L648.3 192.50 L649.3 192.91 L650.3 193.32 L651.3 193.73 L652.3 194.14 L653.3 194.55 L654.3 194.97 L655.3 195.38 L656.3 195.79 L657.3 196.20 L658.3 196.61 L659.3 197.02 L660.3 197.43 L661.3 197.85 L662.3 198.26 L663.3 198.67 L664.3 199.08 L665.3 199.49 L666.3 199.90 L667.3 200.31 L668.3 200.72 L669.3 201.14 L670.3 201.55 L671.3 201.96 L672.3 202.37 L673.3 202.78 L674.3 203.19 L675.3 203.60 L676.3 204.02 L677.3 204.43 L678.3 204.84 L679.3 205.25 L680.3 205.66 L681.3 206.07 L682.3 206.48 L683.3 206.89 L684.3 207.31 L685.3 207.72 L686.3 208.13 L687.3 208.54 L688.3 208.95 L689.3 209.36 L690.3 209.77 L691.3 210.19 L692.3 210.60 L693.3 211.01 L694.3 211.42 L695.3 211.83 L696.3 212.24 L697.3 212.65 L698.3 213.06 L699.3 213.48 L700.3 213.89 L701.3 214.30 L702.3 214.71 L703.3 215.12 L703.5 215.20" fill="none" stroke="#2ca8a4" stroke-width="1.35" stroke-linejoin="round"/>
<line x1="598.8" y1="108.5" x2="598.8" y2="553" stroke="#bcbcbc" stroke-width="1.2" />
<text x="19.5" y="148" font-size="6.4" fill="#1cb0b0" text-anchor="end" font-weight="normal" textLength="6" lengthAdjust="spacingAndGlyphs"  stroke="#1cb0b0" stroke-width="0.15">60</text>
<text x="19.5" y="212" font-size="6.4" fill="#1cb0b0" text-anchor="end" font-weight="normal" textLength="6" lengthAdjust="spacingAndGlyphs"  stroke="#1cb0b0" stroke-width="0.15">50</text>
<text x="19.5" y="275.5" font-size="6.4" fill="#1cb0b0" text-anchor="end" font-weight="normal" textLength="6" lengthAdjust="spacingAndGlyphs"  stroke="#1cb0b0" stroke-width="0.15">40</text>
<text x="19.5" y="338.8" font-size="6.4" fill="#1cb0b0" text-anchor="end" font-weight="normal" textLength="6" lengthAdjust="spacingAndGlyphs"  stroke="#1cb0b0" stroke-width="0.15">30</text>
<text x="19.5" y="401" font-size="6.4" fill="#1cb0b0" text-anchor="end" font-weight="normal" textLength="6" lengthAdjust="spacingAndGlyphs"  stroke="#1cb0b0" stroke-width="0.15">20</text>
<text x="19.5" y="464.5" font-size="6.4" fill="#1cb0b0" text-anchor="end" font-weight="normal" textLength="6" lengthAdjust="spacingAndGlyphs"  stroke="#1cb0b0" stroke-width="0.15">10</text>
<text x="19.5" y="527.5" font-size="6.4" fill="#1cb0b0" text-anchor="end" font-weight="normal" textLength="3" lengthAdjust="spacingAndGlyphs"  stroke="#1cb0b0" stroke-width="0.15">0</text>
<text transform="translate(12.1 132.1) rotate(-90)" font-size="5.5" fill="#1cb0b0" font-weight="bold" textLength="20.3" lengthAdjust="spacingAndGlyphs">Torque</text>
<text x="33.5" y="178" font-size="6.4" fill="#cc3c1a" text-anchor="end" font-weight="normal" textLength="9.3" lengthAdjust="spacingAndGlyphs"  stroke="#cc3c1a" stroke-width="0.1">500</text>
<text x="33.5" y="248" font-size="6.4" fill="#cc3c1a" text-anchor="end" font-weight="normal" textLength="9.3" lengthAdjust="spacingAndGlyphs"  stroke="#cc3c1a" stroke-width="0.1">400</text>
<text x="33.5" y="318" font-size="6.4" fill="#cc3c1a" text-anchor="end" font-weight="normal" textLength="9.3" lengthAdjust="spacingAndGlyphs"  stroke="#cc3c1a" stroke-width="0.1">300</text>
<text x="33.5" y="388" font-size="6.4" fill="#cc3c1a" text-anchor="end" font-weight="normal" textLength="9.3" lengthAdjust="spacingAndGlyphs"  stroke="#cc3c1a" stroke-width="0.1">200</text>
<text x="33.5" y="457.5" font-size="6.4" fill="#cc3c1a" text-anchor="end" font-weight="normal" textLength="9.3" lengthAdjust="spacingAndGlyphs"  stroke="#cc3c1a" stroke-width="0.1">100</text>
<text x="33.5" y="527.5" font-size="6.4" fill="#cc3c1a" text-anchor="end" font-weight="normal" textLength="3" lengthAdjust="spacingAndGlyphs"  stroke="#cc3c1a" stroke-width="0.1">0</text>
<text transform="translate(26.1 147.5) rotate(-90)" font-size="5.6" fill="#a82c16" stroke="#a82c16" stroke-width="0.15" textLength="35.7" lengthAdjust="spacingAndGlyphs">Horsepower</text>
<text x="104.5" y="532.8" font-size="6.2" fill="#d8461e" text-anchor="start" font-weight="normal" textLength="13" lengthAdjust="spacingAndGlyphs"  stroke="#d8461e" stroke-width="0.2">4000</text>
<text x="259" y="532.8" font-size="6.2" fill="#d8461e" text-anchor="start" font-weight="normal" textLength="13" lengthAdjust="spacingAndGlyphs"  stroke="#d8461e" stroke-width="0.2">5000</text>
<text x="413.5" y="532.8" font-size="6.2" fill="#d8461e" text-anchor="start" font-weight="normal" textLength="13" lengthAdjust="spacingAndGlyphs"  stroke="#d8461e" stroke-width="0.2">6000</text>
<text x="568.3" y="532.8" font-size="6.2" fill="#d8461e" text-anchor="start" font-weight="normal" textLength="13" lengthAdjust="spacingAndGlyphs"  stroke="#d8461e" stroke-width="0.2">7000</text>
<text x="722.5" y="532.8" font-size="6.2" fill="#d8461e" text-anchor="start" font-weight="normal" textLength="13" lengthAdjust="spacingAndGlyphs"  stroke="#d8461e" stroke-width="0.2">8000</text>
<text x="876.5" y="532.8" font-size="6.2" fill="#d8461e" text-anchor="start" font-weight="normal" textLength="13" lengthAdjust="spacingAndGlyphs"  stroke="#d8461e" stroke-width="0.2">9000</text>
<text x="882" y="523" font-size="6.8" fill="#d8461e" text-anchor="start" font-weight="normal" textLength="14" lengthAdjust="spacingAndGlyphs"  stroke="#d8461e" stroke-width="0.2">RPM</text>
<rect x="599.5" y="145.8" width="43.5" height="7.8" fill="#a9a900" />
<rect x="540" y="153.6" width="103" height="8.4" fill="#f4f400" />
<rect x="540" y="162" width="103" height="15.8" fill="#a9a900" />
<rect x="540" y="169" width="103" height="0.5" fill="#9a9a00" />
<line x1="598.8" y1="145.8" x2="598.8" y2="178" stroke="#a8a8a8" stroke-width="1.2" />
<text x="601" y="151.8" font-size="5.6" fill="#2a2a00" text-anchor="start" font-weight="normal" textLength="21" lengthAdjust="spacingAndGlyphs"  stroke="#2a2a00" stroke-width="0.08">(1) CZT-F</text>
<text x="545" y="160" font-size="5.6" fill="#2a2a00" text-anchor="start" font-weight="normal" textLength="27.5" lengthAdjust="spacingAndGlyphs"  stroke="#2a2a00" stroke-width="0.08">Horsepower</text>
<text x="601" y="160" font-size="5.6" fill="#2a2a00" text-anchor="start" font-weight="normal" textLength="19.5" lengthAdjust="spacingAndGlyphs"  stroke="#2a2a00" stroke-width="0.08">547.9 HP</text>
<text x="545" y="167.5" font-size="5.6" fill="#2a2a00" text-anchor="start" font-weight="normal" textLength="15.5" lengthAdjust="spacingAndGlyphs"  stroke="#2a2a00" stroke-width="0.08">Torque</text>
<text x="601" y="167.5" font-size="5.6" fill="#2a2a00" text-anchor="start" font-weight="normal" textLength="26" lengthAdjust="spacingAndGlyphs"  stroke="#2a2a00" stroke-width="0.08">55.58 KG*M</text>
<text x="545" y="175.5" font-size="5.6" fill="#2a2a00" text-anchor="start" font-weight="normal" textLength="3.5" lengthAdjust="spacingAndGlyphs"  stroke="#2a2a00" stroke-width="0.08">X</text>
<text x="601" y="175.5" font-size="5.6" fill="#2a2a00" text-anchor="start" font-weight="normal" textLength="25.5" lengthAdjust="spacingAndGlyphs"  stroke="#2a2a00" stroke-width="0.08">7150.1 RPM</text>
<defs><radialGradient id="lg" cx="0.5" cy="0.42" r="0.62"><stop offset="0" stop-color="#1c4a6e"/><stop offset="0.55" stop-color="#133656"/><stop offset="1" stop-color="#0a1a2a"/></radialGradient>
<linearGradient id="tg" x1="0" y1="0" x2="0" y2="1"><stop offset="0" stop-color="#ff6a00"/><stop offset="0.6" stop-color="#ff8c00"/><stop offset="1" stop-color="#ffb000"/></linearGradient>
<linearGradient id="mg" x1="0" y1="0" x2="1" y2="0"><stop offset="0" stop-color="#fff200"/><stop offset="0.5" stop-color="#ffd000"/><stop offset="1" stop-color="#ff6400"/></linearGradient>
<linearGradient id="dk" x1="0" y1="0" x2="0" y2="1"><stop offset="0" stop-color="#000" stop-opacity="0"/><stop offset="0.55" stop-color="#000" stop-opacity="0.05"/><stop offset="1" stop-color="#000" stop-opacity="0.5"/></linearGradient>
<clipPath id="lc"><rect x="789.5" y="446.5" width="95" height="70.5"/></clipPath></defs>
<rect x="789.5" y="446.5" width="95" height="70.5" fill="url(#lg)"/>
<g clip-path="url(#lc)">
<rect x="789.5" y="446.5" width="8" height="70.5" fill="#061019" fill-opacity="0.7"/>
<rect x="826.4" y="472.4" width="23.2" height="17.2" fill="none" stroke="#5ab0d8" stroke-opacity="0.10" stroke-width="0.6"/>
<rect x="820.6" y="468.1" width="34.8" height="25.9" fill="none" stroke="#5ab0d8" stroke-opacity="0.18" stroke-width="0.6"/>
<rect x="814.8" y="463.8" width="46.4" height="34.5" fill="none" stroke="#5ab0d8" stroke-opacity="0.10" stroke-width="0.6"/>
<rect x="809.0" y="459.5" width="58.1" height="43.1" fill="none" stroke="#5ab0d8" stroke-opacity="0.18" stroke-width="0.6"/>
<rect x="803.2" y="455.1" width="69.7" height="51.7" fill="none" stroke="#5ab0d8" stroke-opacity="0.10" stroke-width="0.6"/>
<rect x="797.4" y="450.8" width="81.3" height="60.3" fill="none" stroke="#5ab0d8" stroke-opacity="0.18" stroke-width="0.6"/>
<rect x="791.6" y="446.5" width="92.9" height="68.9" fill="none" stroke="#5ab0d8" stroke-opacity="0.10" stroke-width="0.6"/>
<rect x="785.8" y="442.2" width="104.5" height="77.6" fill="none" stroke="#5ab0d8" stroke-opacity="0.18" stroke-width="0.6"/>
<line x1="850.1" y1="480.7" x2="890.8" y2="479.9" stroke="#9ad8f8" stroke-opacity="0.10" stroke-width="0.8"/>
<line x1="848.7" y1="482.5" x2="885.3" y2="487.7" stroke="#9ad8f8" stroke-opacity="0.09" stroke-width="0.7"/>
<line x1="848.9" y1="483.9" x2="881.3" y2="492.6" stroke="#9ad8f8" stroke-opacity="0.34" stroke-width="0.6"/>
<line x1="855.0" y1="489.0" x2="895.2" y2="507.8" stroke="#9ad8f8" stroke-opacity="0.26" stroke-width="0.7"/>
<line x1="846.2" y1="487.7" x2="884.5" y2="519.0" stroke="#9ad8f8" stroke-opacity="0.17" stroke-width="0.6"/>
<line x1="848.6" y1="490.7" x2="881.3" y2="520.5" stroke="#9ad8f8" stroke-opacity="0.14" stroke-width="0.8"/>
<line x1="846.7" y1="493.5" x2="866.2" y2="521.3" stroke="#9ad8f8" stroke-opacity="0.10" stroke-width="0.5"/>
<line x1="847.5" y1="498.1" x2="859.8" y2="520.3" stroke="#9ad8f8" stroke-opacity="0.18" stroke-width="0.8"/>
<line x1="842.5" y1="494.5" x2="856.2" y2="535.9" stroke="#9ad8f8" stroke-opacity="0.30" stroke-width="0.6"/>
<line x1="840.6" y1="498.2" x2="846.9" y2="541.0" stroke="#9ad8f8" stroke-opacity="0.31" stroke-width="0.6"/>
<line x1="837.3" y1="492.6" x2="835.4" y2="525.6" stroke="#9ad8f8" stroke-opacity="0.32" stroke-width="0.6"/>
<line x1="836.4" y1="491.4" x2="829.7" y2="533.7" stroke="#9ad8f8" stroke-opacity="0.32" stroke-width="0.8"/>
<line x1="832.9" y1="494.5" x2="818.9" y2="531.9" stroke="#9ad8f8" stroke-opacity="0.27" stroke-width="0.8"/>
<line x1="828.2" y1="500.4" x2="809.7" y2="537.3" stroke="#9ad8f8" stroke-opacity="0.23" stroke-width="0.8"/>
<line x1="827.2" y1="497.6" x2="809.3" y2="525.2" stroke="#9ad8f8" stroke-opacity="0.40" stroke-width="0.9"/>
<line x1="827.4" y1="492.2" x2="801.2" y2="519.7" stroke="#9ad8f8" stroke-opacity="0.09" stroke-width="0.7"/>
<line x1="828.9" y1="488.2" x2="812.8" y2="500.9" stroke="#9ad8f8" stroke-opacity="0.33" stroke-width="0.6"/>
<line x1="824.4" y1="488.4" x2="785.0" y2="510.1" stroke="#9ad8f8" stroke-opacity="0.11" stroke-width="0.7"/>
<line x1="816.7" y1="487.8" x2="782.1" y2="498.8" stroke="#9ad8f8" stroke-opacity="0.36" stroke-width="0.6"/>
<line x1="823.2" y1="483.5" x2="777.9" y2="491.1" stroke="#9ad8f8" stroke-opacity="0.39" stroke-width="0.6"/>
<line x1="824.8" y1="481.5" x2="799.9" y2="482.5" stroke="#9ad8f8" stroke-opacity="0.24" stroke-width="0.8"/>
<line x1="828.0" y1="479.7" x2="793.7" y2="475.3" stroke="#9ad8f8" stroke-opacity="0.20" stroke-width="0.8"/>
<line x1="819.7" y1="473.9" x2="793.2" y2="463.7" stroke="#9ad8f8" stroke-opacity="0.42" stroke-width="0.8"/>
<line x1="817.3" y1="471.8" x2="785.6" y2="457.8" stroke="#9ad8f8" stroke-opacity="0.54" stroke-width="0.9"/>
<line x1="825.3" y1="472.0" x2="810.5" y2="461.6" stroke="#9ad8f8" stroke-opacity="0.42" stroke-width="0.5"/>
<line x1="828.4" y1="472.3" x2="811.5" y2="457.1" stroke="#9ad8f8" stroke-opacity="0.28" stroke-width="0.5"/>
<line x1="830.3" y1="471.6" x2="816.7" y2="455.1" stroke="#9ad8f8" stroke-opacity="0.29" stroke-width="0.5"/>
<line x1="830.3" y1="464.1" x2="823.4" y2="449.0" stroke="#9ad8f8" stroke-opacity="0.24" stroke-width="0.7"/>
<line x1="834.2" y1="469.9" x2="818.6" y2="424.5" stroke="#9ad8f8" stroke-opacity="0.60" stroke-width="0.7"/>
<line x1="836.2" y1="469.9" x2="832.7" y2="447.8" stroke="#9ad8f8" stroke-opacity="0.28" stroke-width="0.6"/>
<line x1="838.5" y1="468.7" x2="839.2" y2="450.2" stroke="#9ad8f8" stroke-opacity="0.58" stroke-width="0.8"/>
<line x1="840.0" y1="463.5" x2="841.5" y2="450.3" stroke="#9ad8f8" stroke-opacity="0.37" stroke-width="1.0"/>
<line x1="844.9" y1="462.5" x2="851.7" y2="444.3" stroke="#9ad8f8" stroke-opacity="0.30" stroke-width="0.6"/>
<line x1="846.4" y1="465.7" x2="865.6" y2="430.9" stroke="#9ad8f8" stroke-opacity="0.28" stroke-width="0.6"/>
<line x1="852.7" y1="462.3" x2="875.0" y2="433.9" stroke="#9ad8f8" stroke-opacity="0.51" stroke-width="0.9"/>
<line x1="847.6" y1="472.0" x2="873.0" y2="448.0" stroke="#9ad8f8" stroke-opacity="0.29" stroke-width="0.5"/>
<line x1="848.8" y1="472.2" x2="868.3" y2="456.3" stroke="#9ad8f8" stroke-opacity="0.45" stroke-width="1.0"/>
<line x1="858.5" y1="470.4" x2="895.4" y2="451.3" stroke="#9ad8f8" stroke-opacity="0.58" stroke-width="0.7"/>
<line x1="850.4" y1="476.5" x2="872.7" y2="468.4" stroke="#9ad8f8" stroke-opacity="0.22" stroke-width="0.8"/>
<line x1="859.6" y1="478.6" x2="884.5" y2="475.9" stroke="#9ad8f8" stroke-opacity="0.29" stroke-width="0.9"/>
<rect x="797.6" y="493.1" width="0.7" height="3.3" fill="#5ab8e0" fill-opacity="0.41"/>
<rect x="834.9" y="459.1" width="0.7" height="2.0" fill="#5ab8e0" fill-opacity="0.43"/>
<rect x="881.8" y="474.4" width="3.8" height="0.7" fill="#5ab8e0" fill-opacity="0.40"/>
<rect x="805.7" y="455.5" width="3.7" height="0.7" fill="#5ab8e0" fill-opacity="0.43"/>
<rect x="803.4" y="504.8" width="0.7" height="3.0" fill="#5ab8e0" fill-opacity="0.27"/>
<rect x="841.6" y="455.7" width="3.9" height="0.7" fill="#5ab8e0" fill-opacity="0.38"/>
<rect x="839.5" y="512.3" width="3.6" height="0.7" fill="#5ab8e0" fill-opacity="0.44"/>
<rect x="809.5" y="464.3" width="1.7" height="0.7" fill="#5ab8e0" fill-opacity="0.36"/>
<rect x="814.1" y="476.0" width="3.7" height="0.7" fill="#5ab8e0" fill-opacity="0.27"/>
<rect x="833.0" y="487.6" width="0.7" height="2.3" fill="#5ab8e0" fill-opacity="0.47"/>
<rect x="837.2" y="484.0" width="0.7" height="1.1" fill="#5ab8e0" fill-opacity="0.30"/>
<rect x="806.9" y="446.8" width="0.7" height="1.5" fill="#5ab8e0" fill-opacity="0.32"/>
<rect x="858.4" y="485.7" width="2.6" height="0.7" fill="#5ab8e0" fill-opacity="0.34"/>
<rect x="864.0" y="454.0" width="0.7" height="1.7" fill="#5ab8e0" fill-opacity="0.25"/>
<rect x="862.9" y="482.3" width="0.7" height="3.3" fill="#5ab8e0" fill-opacity="0.47"/>
<rect x="831.6" y="489.7" width="0.7" height="2.5" fill="#5ab8e0" fill-opacity="0.39"/>
<rect x="832.5" y="484.1" width="3.8" height="0.7" fill="#5ab8e0" fill-opacity="0.39"/>
<rect x="872.8" y="512.9" width="2.7" height="0.7" fill="#5ab8e0" fill-opacity="0.48"/>
<rect x="869.3" y="456.2" width="2.3" height="0.7" fill="#5ab8e0" fill-opacity="0.18"/>
<rect x="812.4" y="451.7" width="0.7" height="3.4" fill="#5ab8e0" fill-opacity="0.46"/>
<rect x="804.2" y="497.0" width="0.7" height="1.4" fill="#5ab8e0" fill-opacity="0.46"/>
<rect x="881.4" y="462.0" width="0.7" height="2.2" fill="#5ab8e0" fill-opacity="0.32"/>
<rect x="883.5" y="505.2" width="2.3" height="0.7" fill="#5ab8e0" fill-opacity="0.33"/>
<rect x="821.7" y="460.3" width="3.2" height="0.7" fill="#5ab8e0" fill-opacity="0.16"/>
<rect x="842.1" y="477.6" width="2.0" height="0.7" fill="#5ab8e0" fill-opacity="0.37"/>
<rect x="838.2" y="451.0" width="0.7" height="3.4" fill="#5ab8e0" fill-opacity="0.49"/>
<rect x="799.5" y="465.2" width="3.3" height="0.7" fill="#5ab8e0" fill-opacity="0.24"/>
<rect x="801.8" y="476.3" width="0.7" height="3.5" fill="#5ab8e0" fill-opacity="0.24"/>
<rect x="803.7" y="511.3" width="0.7" height="3.1" fill="#5ab8e0" fill-opacity="0.18"/>
<rect x="795.0" y="495.0" width="1.2" height="0.7" fill="#5ab8e0" fill-opacity="0.48"/>
<rect x="849.8" y="503.0" width="3.6" height="0.7" fill="#5ab8e0" fill-opacity="0.17"/>
<rect x="871.5" y="478.5" width="2.7" height="0.7" fill="#5ab8e0" fill-opacity="0.47"/>
<rect x="814.9" y="455.6" width="0.7" height="1.7" fill="#5ab8e0" fill-opacity="0.19"/>
<rect x="804.8" y="450.1" width="1.9" height="0.7" fill="#5ab8e0" fill-opacity="0.26"/>
<rect x="861.7" y="466.9" width="0.7" height="1.5" fill="#5ab8e0" fill-opacity="0.27"/>
<rect x="791.2" y="464.2" width="3.2" height="0.7" fill="#5ab8e0" fill-opacity="0.34"/>
<rect x="807.5" y="480.0" width="0.7" height="1.3" fill="#5ab8e0" fill-opacity="0.44"/>
<rect x="830.6" y="481.4" width="0.7" height="2.2" fill="#5ab8e0" fill-opacity="0.33"/>
<rect x="854.8" y="515.8" width="3.5" height="0.7" fill="#5ab8e0" fill-opacity="0.40"/>
<rect x="849.9" y="475.0" width="1.2" height="0.7" fill="#5ab8e0" fill-opacity="0.20"/>
<rect x="796.2" y="498.7" width="1.5" height="0.7" fill="#5ab8e0" fill-opacity="0.18"/>
<rect x="869.4" y="507.9" width="0.7" height="1.8" fill="#5ab8e0" fill-opacity="0.23"/>
<rect x="817.3" y="478.9" width="2.3" height="0.7" fill="#5ab8e0" fill-opacity="0.24"/>
<rect x="880.9" y="515.1" width="0.7" height="1.7" fill="#5ab8e0" fill-opacity="0.49"/>
<rect x="818.9" y="471.6" width="2.1" height="0.7" fill="#5ab8e0" fill-opacity="0.32"/>
<rect x="837.3" y="460.7" width="0.7" height="1.0" fill="#5ab8e0" fill-opacity="0.24"/>
<rect x="798.0" y="474.7" width="1.1" height="0.7" fill="#5ab8e0" fill-opacity="0.26"/>
<rect x="811.6" y="487.8" width="0.7" height="3.3" fill="#5ab8e0" fill-opacity="0.38"/>
<rect x="857.5" y="508.5" width="2.0" height="0.7" fill="#5ab8e0" fill-opacity="0.49"/>
<rect x="803.7" y="497.6" width="0.7" height="1.1" fill="#5ab8e0" fill-opacity="0.44"/>
<rect x="874.2" y="490.7" width="0.7" height="3.4" fill="#5ab8e0" fill-opacity="0.20"/>
<rect x="839.3" y="482.1" width="0.7" height="3.4" fill="#5ab8e0" fill-opacity="0.44"/>
<rect x="845.0" y="509.4" width="0.7" height="3.1" fill="#5ab8e0" fill-opacity="0.23"/>
<rect x="792.5" y="455.9" width="1.3" height="0.7" fill="#5ab8e0" fill-opacity="0.44"/>
<rect x="842.6" y="490.8" width="0.7" height="3.0" fill="#5ab8e0" fill-opacity="0.32"/>
<rect x="789.8" y="502.7" width="0.7" height="2.5" fill="#5ab8e0" fill-opacity="0.34"/>
<rect x="852.1" y="451.2" width="0.7" height="1.8" fill="#5ab8e0" fill-opacity="0.18"/>
<rect x="814.7" y="497.9" width="3.2" height="0.7" fill="#5ab8e0" fill-opacity="0.49"/>
<rect x="836.4" y="473.5" width="3.1" height="0.7" fill="#5ab8e0" fill-opacity="0.42"/>
<rect x="848.1" y="491.8" width="1.4" height="0.7" fill="#5ab8e0" fill-opacity="0.24"/>
<rect x="860.1" y="468.0" width="0.7" height="1.0" fill="#5ab8e0" fill-opacity="0.17"/>
<rect x="815.0" y="493.9" width="0.7" height="3.0" fill="#5ab8e0" fill-opacity="0.25"/>
<rect x="838.6" y="479.3" width="1.4" height="0.7" fill="#5ab8e0" fill-opacity="0.46"/>
<rect x="808.4" y="515.5" width="0.7" height="1.1" fill="#5ab8e0" fill-opacity="0.31"/>
<rect x="867.4" y="514.8" width="1.8" height="0.7" fill="#5ab8e0" fill-opacity="0.22"/>
<rect x="879.3" y="461.4" width="0.7" height="1.4" fill="#5ab8e0" fill-opacity="0.33"/>
<rect x="880.0" y="455.8" width="0.7" height="2.5" fill="#5ab8e0" fill-opacity="0.46"/>
<rect x="856.3" y="462.8" width="0.7" height="2.5" fill="#5ab8e0" fill-opacity="0.16"/>
<rect x="789.8" y="481.2" width="1.9" height="0.7" fill="#5ab8e0" fill-opacity="0.20"/>
<rect x="822.2" y="468.8" width="0.7" height="1.0" fill="#5ab8e0" fill-opacity="0.41"/>
<rect x="869.2" y="455.0" width="0.7" height="3.1" fill="#5ab8e0" fill-opacity="0.47"/>
<rect x="817.0" y="472.7" width="4.0" height="0.7" fill="#5ab8e0" fill-opacity="0.36"/>
<rect x="823.8" y="476.7" width="1.1" height="0.7" fill="#5ab8e0" fill-opacity="0.19"/>
<rect x="868.8" y="466.6" width="0.7" height="1.7" fill="#5ab8e0" fill-opacity="0.24"/>
<rect x="838.0" y="459.9" width="3.9" height="0.7" fill="#5ab8e0" fill-opacity="0.46"/>
<rect x="866.6" y="491.0" width="0.7" height="3.8" fill="#5ab8e0" fill-opacity="0.34"/>
<rect x="857.9" y="450.0" width="0.7" height="2.4" fill="#5ab8e0" fill-opacity="0.41"/>
<rect x="850.7" y="466.7" width="3.8" height="0.7" fill="#5ab8e0" fill-opacity="0.19"/>
<rect x="834.4" y="470.7" width="3.2" height="0.7" fill="#5ab8e0" fill-opacity="0.49"/>
<rect x="814.2" y="492.7" width="2.7" height="0.7" fill="#5ab8e0" fill-opacity="0.29"/>
<rect x="805.4" y="457.9" width="3.7" height="0.7" fill="#5ab8e0" fill-opacity="0.32"/>
<rect x="810.4" y="510.4" width="0.7" height="2.3" fill="#5ab8e0" fill-opacity="0.20"/>
<rect x="807.8" y="452.9" width="1.3" height="0.7" fill="#5ab8e0" fill-opacity="0.23"/>
<rect x="814.0" y="486.7" width="0.7" height="3.2" fill="#5ab8e0" fill-opacity="0.29"/>
<rect x="828.8" y="483.5" width="2.0" height="0.7" fill="#5ab8e0" fill-opacity="0.17"/>
<rect x="815.9" y="514.7" width="2.5" height="0.7" fill="#5ab8e0" fill-opacity="0.37"/>
<rect x="871.5" y="461.7" width="1.7" height="0.7" fill="#5ab8e0" fill-opacity="0.29"/>
<rect x="831.9" y="513.8" width="0.7" height="3.6" fill="#5ab8e0" fill-opacity="0.16"/>
<rect x="792.6" y="496.5" width="0.7" height="2.4" fill="#5ab8e0" fill-opacity="0.36"/>
<rect x="789.5" y="474.1" width="0.7" height="3.5" fill="#5ab8e0" fill-opacity="0.45"/>
<line x1="802" y1="448" x2="802" y2="515" stroke="#8cc8e8" stroke-opacity="0.25" stroke-width="0.8"/>
<line x1="877" y1="448" x2="877" y2="515" stroke="#8cc8e8" stroke-opacity="0.3" stroke-width="0.8"/>
<line x1="882" y1="466" x2="882" y2="475" stroke="#e0f0ff" stroke-opacity="0.7" stroke-width="1"/>
<rect x="789.5" y="446.5" width="95" height="70.5" fill="url(#dk)"/>
</g>
<text x="814.5" y="481.6" font-family="Liberation Sans" font-weight="bold" font-style="italic" font-size="16" fill="#1a0800" stroke="#1a0800" stroke-width="1.6" stroke-opacity="0.7" fill-opacity="0.8" textLength="43" lengthAdjust="spacingAndGlyphs">TUNE</text>
<text x="800" y="494" font-family="Liberation Sans" font-weight="bold" font-style="italic" font-size="15.5" fill="#1a0800" stroke="#1a0800" stroke-width="1.6" stroke-opacity="0.7" fill-opacity="0.8" textLength="75" lengthAdjust="spacingAndGlyphs">MASTERS</text>
<text x="813.5" y="480.6" font-family="Liberation Sans" font-weight="bold" font-style="italic" font-size="16" fill="url(#tg)" stroke="url(#tg)" stroke-width="1.2" stroke-linejoin="round" textLength="43" lengthAdjust="spacingAndGlyphs">TUNE</text>
<text x="799" y="493" font-family="Liberation Sans" font-weight="bold" font-style="italic" font-size="15.5" fill="url(#mg)" stroke="url(#mg)" stroke-width="1.2" stroke-linejoin="round" textLength="75" lengthAdjust="spacingAndGlyphs">MASTERS</text>
</svg>
</body></html>
